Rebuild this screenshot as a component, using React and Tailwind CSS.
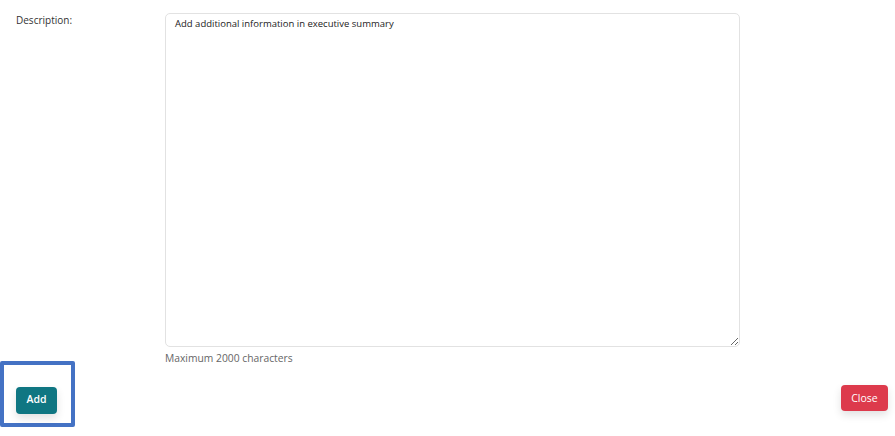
export default function App() {
  return (
    <div className="w-[895px] h-[436px] bg-white relative" style={{ fontFamily: '"Open Sans", "Liberation Sans", sans-serif' }}>
      <div className="flex pt-[13px]">
        <div className="w-[165px] pl-[16px] pt-0 text-[10px] text-[#333]">Description:</div>
        <div className="flex flex-col">
          <textarea
            className="w-[575px] h-[334px] border border-[#e2e2e2] rounded-[5px] px-[9px] py-[3px] text-[9.5px] text-[#222] outline-none resize-y"
            defaultValue="Add additional information in executive summary"
            style={{ fontFamily: '"Open Sans", "Liberation Sans", sans-serif' }}
          />
          <div className="mt-[4px] text-[10.3px] text-[#666]">Maximum 2000 characters</div>
        </div>
      </div>
      <div className="flex justify-between items-start mt-[-5px]">
        <div className="w-[75px] h-[66px] border-[4px] border-[#4472c4] rounded-[2px] pl-[12px] pt-[20px]">
          <button className="w-[41px] h-[27px] rounded-[4px] bg-[#0f7682] text-white text-[10.5px] font-semibold shadow-[0_4px_8px_rgba(0,0,0,0.12)]">Add</button>
        </div>
        <button className="mt-[24px] mr-[7px] w-[47px] h-[26px] rounded-[4px] bg-[#dd3a4c] text-white text-[10.5px] font-medium shadow-[0_4px_8px_rgba(0,0,0,0.12)]">Close</button>
      </div>
    </div>
  );
}
